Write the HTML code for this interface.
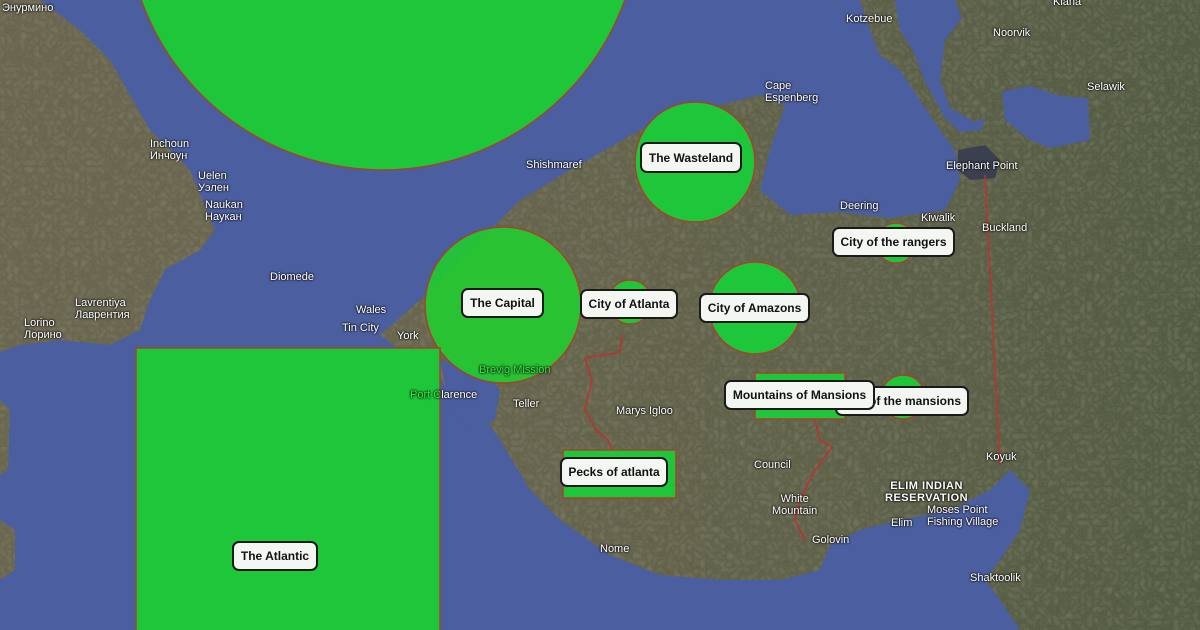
<!DOCTYPE html>
<html><head><meta charset="utf-8"><style>
body{margin:0;width:1200px;height:630px;overflow:hidden;background:#4b5e9f;font-family:"Liberation Sans",Arial,sans-serif;position:relative}
svg{position:absolute;left:0;top:0}
.l{position:absolute;background:#f4f6f2;border:2px solid #1a1a1a;border-radius:7px;font-weight:bold;font-size:12px;color:#111;display:flex;align-items:center;justify-content:center;box-sizing:border-box;white-space:nowrap}
.t{position:absolute;color:#fff;font-size:11px;text-shadow:0 0 2px #000,0 0 2px #000;line-height:12px;white-space:nowrap}
</style></head><body>
<svg width="1200" height="630">
<defs>
<filter id="n"><feTurbulence baseFrequency="0.15" numOctaves="2" seed="3"/><feColorMatrix values="0 0 0 0 0.3  0 0 0 0 0.3  0 0 0 0 0.22  0 0 0 0.5 0"/></filter>
<linearGradient id="g" x1="0" x2="1" y1="0" y2="0"><stop offset="0.3" stop-color="#67634c"/><stop offset="0.7" stop-color="#5c5e46"/><stop offset="1" stop-color="#4f5940"/></linearGradient>
<clipPath id="c"><path d="M380,335 L420,300 L470,250 L520,200 L570,170 L640,130 L700,110 L760,95 L785,105 L770,150 L760,190 L790,215 L840,212 L890,218 L945,210 L960,180 L955,150 L940,130 L920,100 L900,70 L880,55 L870,30 L860,0 L1200,0 L1200,630 L1020,630 L1000,600 L985,580 L1000,560 L1020,530 L1030,490 L1010,470 L990,490 L950,510 L900,520 L860,530 L830,545 L820,570 L780,580 L720,580 L660,575 L610,555 L560,520 L530,490 L500,440 L480,410 L460,400 L430,370 L400,350 Z M0,0 L40,0 L80,30 L110,60 L150,130 L190,170 L215,230 L200,250 L165,270 L150,300 L140,330 L110,345 L60,340 L20,345 L0,352 Z M0,400 L10,410 L8,470 L0,475 Z M0,520 L15,530 L15,570 L0,580 Z"/></clipPath>
</defs>
<g clip-path="url(#c)">
<rect width="1200" height="630" fill="url(#g)"/>
<rect width="1200" height="630" filter="url(#n)"/>
</g>
<g fill="#4b5e9f">
<path d="M895,0 L955,0 L962,18 L945,40 L940,80 L950,108 L975,122 L985,118 L982,130 L960,132 L945,118 L925,82 L915,55 L900,30 Z"/>
<path d="M1002,92 L1030,86 L1060,96 L1088,98 L1090,140 L1050,148 L1030,140 L1005,120 Z"/>
<path d="M440,360 L480,370 L500,390 L495,420 L470,430 L450,410 Z"/>
</g>
<path d="M958,150 L985,145 L1000,160 L995,178 L970,180 L958,170 Z" fill="#3b4050"/>
<g fill="#1ec73a" stroke="#a4432c" stroke-width="1.5">
<circle cx="383" cy="-87" r="257"/>
<circle cx="695" cy="162" r="60"/>
<circle cx="503" cy="305" r="78" fill="#22cc30" fill-opacity="0.9"/>
<circle cx="630" cy="302" r="22"/>
<circle cx="755" cy="308" r="46"/>
<circle cx="896" cy="243" r="20"/>
<circle cx="903" cy="397" r="22"/>
<rect x="136" y="348" width="304" height="290"/>
<rect x="755" y="373" width="90" height="46"/>
<rect x="563" y="450" width="113" height="48"/>
</g>
<g fill="none" stroke="#c03030" stroke-width="1.5">
<path d="M622,335 L620,352 L585,358 L592,380 L585,410 L596,430 L608,440 L612,450"/>
<path d="M815,420 L820,440 L832,447 L815,470 L800,500 L795,520 L805,540"/>
<path d="M985,175 L1000,465"/>
</g>
</svg>
<div class="t" style="left:2px;top:2px">Энурмино</div>
<div class="t" style="left:1053px;top:-4px">Kiana</div>
<div class="t" style="left:150px;top:138px">Inchoun<br>Инчоун</div>
<div class="t" style="left:198px;top:170px">Uelen<br>Уэлен</div>
<div class="t" style="left:205px;top:199px">Naukan<br>Наукан</div>
<div class="t" style="left:270px;top:271px">Diomede</div>
<div class="t" style="left:75px;top:297px">Lavrentiya<br>Лаврентия</div>
<div class="t" style="left:24px;top:317px">Lorino<br>Лорино</div>
<div class="t" style="left:356px;top:304px">Wales</div>
<div class="t" style="left:342px;top:322px">Tin City</div>
<div class="t" style="left:397px;top:330px">York</div>
<div class="t" style="left:479px;top:364px;color:#3de24a">Brevig Mission</div>
<div class="t" style="left:410px;top:389px"><span style="color:#3de24a">Port C</span>larence</div>
<div class="t" style="left:513px;top:398px">Teller</div>
<div class="t" style="left:526px;top:159px">Shishmaref</div>
<div class="t" style="left:765px;top:80px">Cape<br>Espenberg</div>
<div class="t" style="left:846px;top:13px">Kotzebue</div>
<div class="t" style="left:993px;top:27px">Noorvik</div>
<div class="t" style="left:1087px;top:81px">Selawik</div>
<div class="t" style="left:946px;top:160px">Elephant Point</div>
<div class="t" style="left:840px;top:200px">Deering</div>
<div class="t" style="left:921px;top:212px">Kiwalik</div>
<div class="t" style="left:982px;top:222px">Buckland</div>
<div class="t" style="left:616px;top:405px">Marys Igloo</div>
<div class="t" style="left:754px;top:459px">Council</div>
<div class="t" style="left:772px;top:493px;text-align:center">White<br>Mountain</div>
<div class="t" style="left:812px;top:534px">Golovin</div>
<div class="t" style="left:600px;top:543px">Nome</div>
<div class="t" style="left:986px;top:451px">Koyuk</div>
<div class="t" style="left:885px;top:480px;font-weight:bold;letter-spacing:0.5px;text-align:center">ELIM INDIAN<br>RESERVATION</div>
<div class="t" style="left:927px;top:504px">Moses Point<br>Fishing Village</div>
<div class="t" style="left:891px;top:517px">Elim</div>
<div class="t" style="left:970px;top:572px">Shaktoolik</div>
<div class="l" style="left:640px;top:142px;width:102px;height:31px">The Wasteland</div>
<div class="l" style="left:461px;top:288px;width:83px;height:30px">The Capital</div>
<div class="l" style="left:580px;top:289px;width:98px;height:30px">City of Atlanta</div>
<div class="l" style="left:699px;top:293px;width:111px;height:30px">City of Amazons</div>
<div class="l" style="left:832px;top:227px;width:123px;height:30px">City of the rangers</div>
<div class="l" style="left:835px;top:386px;width:134px;height:30px">City of the mansions</div>
<div class="l" style="left:724px;top:380px;width:151px;height:30px">Mountains of Mansions</div>
<div class="l" style="left:560px;top:457px;width:108px;height:30px">Pecks of atlanta</div>
<div class="l" style="left:232px;top:541px;width:86px;height:30px">The Atlantic</div>
</body></html>
